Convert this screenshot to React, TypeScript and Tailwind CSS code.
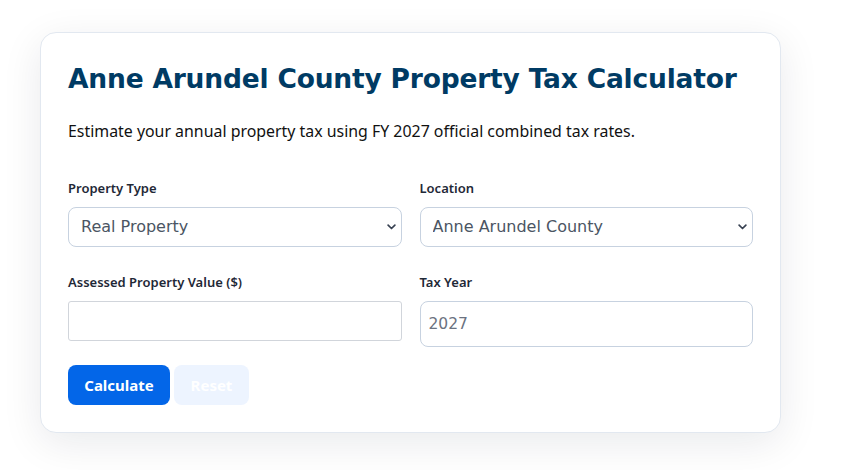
import { useState } from "react";

const wide = { fontFamily: '"DejaVu Sans", "Noto Sans", sans-serif' };

function Chevron() {
  return (
    <svg viewBox="0 0 12 8" className="pointer-events-none absolute right-[6px] top-1/2 h-[6px] w-[9px] -translate-y-1/2" fill="none" stroke="#374151" strokeWidth="2.2">
      <path d="M1.5 1.5 6 6l4.5-4.5" strokeLinecap="round" strokeLinejoin="round" />
    </svg>
  );
}

export default function App() {
  const [value, setValue] = useState("");
  const [type, setType] = useState("Real Property");
  const [loc, setLoc] = useState("Anne Arundel County");

  return (
    <div className="min-h-[470px] bg-white pl-[40px] pt-[32px] font-['Noto_Sans',sans-serif]">
      <div className="w-[741px] rounded-[16px] border border-[#e2e8f0] bg-white px-[27px] pb-[27px] pt-[26px] shadow-[0_10px_40px_rgba(15,23,42,0.09)]">
        <h1
          className="text-[26.5px] font-bold leading-[40px] tracking-[-0.2px] text-[#003b64]"
          style={wide}
        >
          Anne Arundel County Property Tax Calculator
        </h1>
        <p className="mt-[21px] text-[15.9px] leading-[22px] text-[#111]">
          Estimate your annual property tax using FY 2027 official combined tax rates.
        </p>

        <div className="mt-[38px] grid grid-cols-2 gap-x-[18px]">
          <div>
            <label className="block text-[13px] font-semibold leading-[17px] text-[#1f2937]">Property Type</label>
            <div className="relative mt-[10px]">
              <select
                value={type}
                onChange={(e) => setType(e.target.value)}
                className="h-[40px] w-full appearance-none rounded-[8px] border border-[#c7d2e0] bg-white px-[12px] text-[16px] text-[#4b5563]"
                style={wide}
              >
                <option>Real Property</option>
                <option>Personal Property</option>
              </select>
              <Chevron />
            </div>
          </div>
          <div>
            <label className="block text-[13px] font-semibold leading-[17px] text-[#1f2937]">Location</label>
            <div className="relative mt-[10px]">
              <select
                value={loc}
                onChange={(e) => setLoc(e.target.value)}
                className="h-[40px] w-full appearance-none rounded-[8px] border border-[#c7d2e0] bg-white px-[12px] text-[16px] text-[#4b5563]"
                style={wide}
              >
                <option>Anne Arundel County</option>
                <option>Annapolis</option>
                <option>Highland Beach</option>
              </select>
              <Chevron />
            </div>
          </div>

          <div className="mt-[27px]">
            <label className="block text-[13px] font-semibold leading-[17px] text-[#1f2937]">Assessed Property Value ($)</label>
            <input
              value={value}
              onChange={(e) => setValue(e.target.value)}
              className="mt-[10px] block h-[40px] w-full rounded-[3px] border border-[#d1d5db] bg-white px-[8px] text-[15px] outline-none"
            />
          </div>
          <div className="mt-[27px]">
            <label className="block text-[13px] font-semibold leading-[17px] text-[#1f2937]">Tax Year</label>
            <input
              readOnly
              value="2027"
              className="mt-[10px] block h-[46px] w-full rounded-[8px] border border-[#c7d2e0] bg-white px-[8px] text-[15.5px] text-[#6b7280] outline-none"
              style={wide}
            />
          </div>
        </div>

        <div className="mt-[18px] flex gap-[4px]">
          <button className="h-[40px] w-[102px] rounded-[8px] bg-[#0366e8] text-[15px] font-bold text-white">
            Calculate
          </button>
          <button className="h-[40px] w-[75px] rounded-[8px] bg-[#edf4ff] text-[15px] font-bold text-white">
            Reset
          </button>
        </div>
      </div>
    </div>
  );
}
